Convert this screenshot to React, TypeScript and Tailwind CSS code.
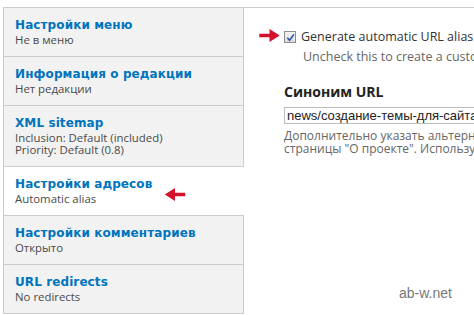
import { ReactNode } from 'react'

interface TabItem {
  title: string
  summary: string[]
  active?: boolean
}

const tabs: TabItem[] = [
  { title: 'Настройки меню', summary: ['Не в меню'] },
  { title: 'Информация о редакции', summary: ['Нет редакции'] },
  { title: 'XML sitemap', summary: ['Inclusion: Default (included)', 'Priority: Default (0.8)'] },
  { title: 'Настройки адресов', summary: ['Automatic alias'], active: true },
  { title: 'Настройки комментариев', summary: ['Открыто'] },
  { title: 'URL redirects', summary: ['No redirects'] },
]

function RedArrow({ dir, className }: { dir: 'left' | 'right'; className: string }) {
  return (
    <svg
      viewBox="0 0 22 14"
      className={`absolute ${className}`}
      style={dir === 'left' ? { transform: 'scaleX(-1)' } : undefined}
    >
      <path d="M0 5 H11 V0 L22 7 L11 14 V9 H0 Z" fill="#d3132b" />
    </svg>
  )
}

function Tab({ item }: { item: TabItem }) {
  return (
    <li
      className={
        'border-b border-[#cccccc] pl-[11px] pt-[10px] pb-[10px] ' +
        (item.active ? 'bg-white' : 'bg-[#f2f2f2] border-r')
      }
    >
      <div className="font-['DejaVu_Sans',sans-serif] font-bold text-[12px] leading-[15px] text-[#0074bd] tracking-[0.1px]">
        {item.title}
      </div>
      <div className="mt-[1px] font-['Open_Sans',sans-serif] text-[11.4px] leading-[12px] text-[#4a4a4a]">
        {item.summary.map((s) => (
          <div key={s}>{s}</div>
        ))}
      </div>
    </li>
  )
}

function Checkbox() {
  return (
    <span className="w-[12px] h-[12px] border border-[#8e8e8e] bg-gradient-to-b from-[#f4f4f4] to-[#dcdcdc] flex items-center justify-center shrink-0">
      <svg viewBox="0 0 10 10" className="w-[9px] h-[9px]">
        <path d="M1.5 5.2 L4 8 L8.8 1.5" stroke="#2b4aa8" strokeWidth="1.7" fill="none" />
      </svg>
    </span>
  )
}

function Line({ children }: { children: ReactNode }) {
  return <div className="whitespace-nowrap">{children}</div>
}

export default function App() {
  return (
    <div className="relative w-[474px] h-[315px] overflow-hidden bg-white pt-[7px] pl-[3px]">
      <div className="flex border-t border-l border-[#cccccc] w-[600px]">
        <ul className="w-[240px] shrink-0">
          {tabs.map((t) => (
            <Tab key={t.title} item={t} />
          ))}
        </ul>

        <div className="flex-1 pl-[40px] pt-[21px] font-['Open_Sans',sans-serif] text-[#333]">
          <div className="flex items-center gap-[5px]">
            <Checkbox />
            <span className="text-[12.5px] leading-[16px] text-[#333]">Generate automatic URL alias</span>
          </div>
          <div className="pl-[19px] mt-[4px] text-[12.5px] leading-[16px] text-[#666]">
            Uncheck this to create a custom alias below.
          </div>

          <div className="mt-[18px] font-bold text-[14px] leading-[17px] text-[#222]">Синоним URL</div>
          <div className="mt-[7px] w-[400px] h-[17px] border border-[#bbbbbb] pl-[2px] flex items-center">
            <span className="font-['Liberation_Sans',sans-serif] text-[13px] leading-[15px] text-[#222] whitespace-nowrap">
              news/создание-темы-для-сайта-на-drupal
            </span>
          </div>
          <div className="mt-[5px] text-[12px] leading-[13px] text-[#666]">
            <Line>
              Дополнительно указать альтернативный URL, по которому можно получить доступ к этим данным. Например, напишите "about" для
            </Line>
            <Line>
              страницы "О проекте". Используйте относительный путь и не добавляйте слэш в конце, иначе URL-синоним не будет работать.
            </Line>
          </div>
        </div>
      </div>

      <RedArrow dir="right" className="left-[259px] top-[29px] w-[21px] h-[13px]" />
      <RedArrow dir="left" className="left-[164px] top-[188px] w-[22px] h-[13px]" />

      <div className="absolute left-[399px] top-[283px] font-['Liberation_Sans',sans-serif] text-[14px] text-[#777]">
        ab-w.net
      </div>
    </div>
  )
}
